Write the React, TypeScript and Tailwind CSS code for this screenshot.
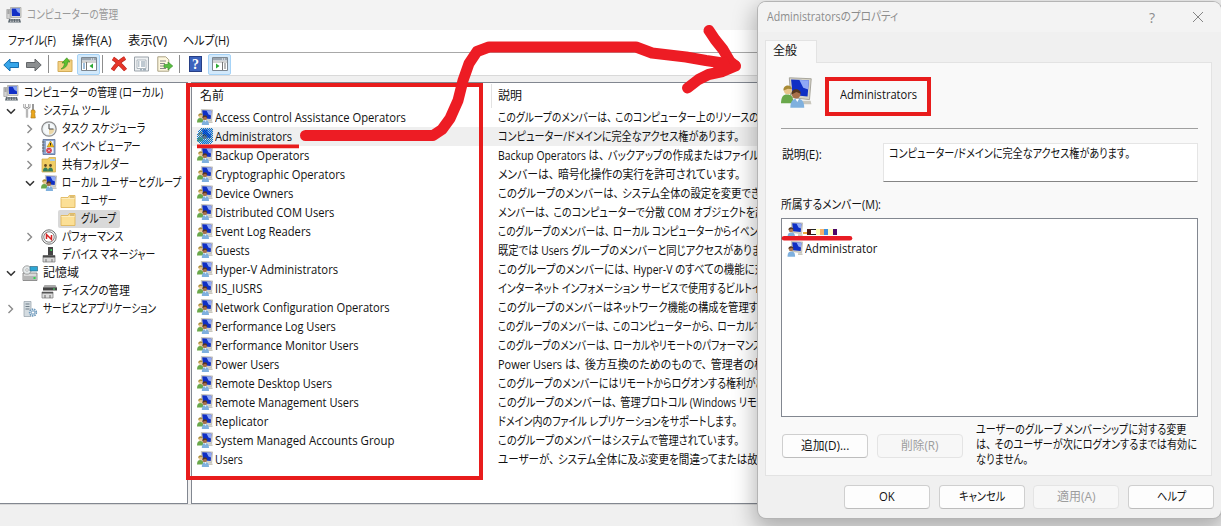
import React, { useLayoutEffect, useRef, useState } from 'react';

interface TextProps {
  children: string;
  w: number;
  className?: string;
}

/**
 * UiText
 * Single line of UI text, condensed or stretched to the given width.
 * The comma keeps some room after it, the other kana are set tight.
 */
const UiText: React.FC<TextProps> = ({ children, w, className = '' }) => {
  const ref = useRef<HTMLSpanElement>(null);
  const [scale, setScale] = useState(1);

  useLayoutEffect(() => {
    if (ref.current) setScale(w / ref.current.offsetWidth);
  }, [children, w]);

  return (
    <span className={`block shrink-0 leading-[18px] ${className}`} style={{ width: w }}>
      <span
        ref={ref}
        className="inline-block origin-left whitespace-pre"
        style={{ transform: `scaleX(${scale})` }}
      >
        {children.split(/(、)/).map((part, i) =>
          part === '、' ? <span key={i} className="pr-1">{part}</span> : part
        )}
      </span>
    </span>
  );
};

type IconName =
  | 'computer' | 'tools' | 'clock' | 'event' | 'shared' | 'group' | 'folder' | 'perf'
  | 'device' | 'storage' | 'disk' | 'services' | 'user' | 'groupSelected';

const Screen = () => (
  <>
    <path d="M4.300.4 15.600.9 14.700 11.700 5 10.500Z" fill="#d6d3c6" stroke="#a5a39a" strokeWidth=".5" />
    <path d="M5.200 1.300 14.400 1.700 13.700 10 6 9.300Z" fill="#0f2fc4" />
    <path d="M9.500 1.500 14.400 1.700 14 6.500 11.500 5.500Z" fill="#8fa8f6" />
    <path d="M11 12.200h4.300l.4 1.800H11z" fill="#c9c7bd" />
  </>
);

const People = () => (
  <>
    <path d="M0 13.600c.1-3.400 1-4.600 3.200-4.600s3.200 1.200 3.200 4.600z" fill="#6aa84b" />
    <circle cx="3.500" cy="6.900" r="2" fill="#e8c58c" />
    <path d="M1.300 7C.9 3.600 5.700 3.600 5.700 6.300L3.600 6z" fill="#a88a35" />
    <path d="M4.800 15.900c.1-3.600 1.200-4.700 3.600-4.700s3.500 1.100 3.600 4.700z" fill="#7fb0de" />
    <circle cx="7.800" cy="8.900" r="2.200" fill="#a8704b" />
    <path d="M5.400 9C5 5.500 10.300 5.500 10.200 8.700L8 7.800z" fill="#54361f" />
    <path d="m7.500 11.300.9 1.600.9-1.600" fill="#fff" />
  </>
);

const Icon: React.FC<{ name: IconName; size?: number }> = ({ name, size = 16 }) => (
  <svg width={size} height={size} viewBox="0 0 16 16" className="block shrink-0">
    {name === 'computer' && (
      <>
        <path d="M4.500.5h10.500v10H5z" fill="#d8d8d4" stroke="#a0a09c" strokeWidth=".7" />
        <path d="M5.600 1.500H14v7.500H6z" fill="#1230c6" />
        <path d="M9.500 1.500H14v5l-2.500-1.500z" fill="#86a3f4" />
        <path d="M.8 2.500h3.400v9H.8z" fill="#d3d3d3" stroke="#909090" strokeWidth=".6" />
        <path d="M1.500 4h2M1.500 6h2" stroke="#777" />
        <path d="M3 12h11l1 3.500H2z" fill="#5d6870" />
        <path d="M4 13h9M4 14.500h9" stroke="#d5d5d5" strokeDasharray="1.500 1" strokeWidth=".7" />
      </>
    )}
    {name === 'tools' && (
      <>
        <path d="M2.500 1v3.200L5 5.800l2.300-1.600V1M5 6v8.500" fill="none" stroke="#888" strokeWidth="2.2" />
        <path d="M2.500 1v3.200L5 5.800l2.300-1.600V1M5 6v8.500" fill="none" stroke="#e8e8e8" strokeWidth="1" />
        <path d="M11 1v6" stroke="#777" strokeWidth="1.5" />
        <path d="M9.500 7h3l.8 2-.6 1.500.6 4.500H8.900l.6-4.500L9 9z" fill="#e9a61c" stroke="#a87412" strokeWidth=".6" />
      </>
    )}
    {name === 'clock' && (
      <>
        <circle cx="8" cy="8" r="7.200" fill="#e6ecef" stroke="#8c8c8c" strokeWidth="1.200" />
        <circle cx="8" cy="8" r="5.500" fill="#f6f9fa" />
        <path d="M8 8h5.500A5.500 5.500 0 0 1 8 13.500z" fill="#ecd8a8" />
        <path d="M8 3v5h4.500" fill="none" stroke="#444" />
      </>
    )}
    {name === 'event' && (
      <>
        <path d="M2 .5h12v15H2z" fill="#8ea7cf" stroke="#5b6d95" strokeWidth=".8" />
        <path d="M5 2h7.500v12H5z" fill="#edf2fa" />
        <path d="M1 3h2.500M1 6h2.500M1 9h2.500M1 12h2.500" stroke="#666" />
        <path d="m9.500 2 3.500 6H6z" fill="#f5bd17" stroke="#9b740d" strokeWidth=".5" />
        <path d="M9.500 4v2.500" stroke="#222" />
        <circle cx="8" cy="11.500" r="2.800" fill="#d4374a" />
        <path d="m7 10.500 2 2m0-2-2 2" stroke="#fff" strokeWidth=".8" />
      </>
    )}
    {name === 'shared' && (
      <>
        <path d="M1 2h6l1-1.500h6.500V15H1z" fill="#f0cd62" stroke="#c9a548" strokeWidth=".7" />
        <path d="M9 2h5v2H9z" fill="#a7cce8" />
        <circle cx="4.500" cy="8.500" r="1.400" fill="#624821" />
        <circle cx="9.500" cy="8.500" r="1.400" fill="#624821" />
        <path d="M2 14.500c0-3 1-4 2.500-4s2.500 1 2.500 4zM7 14.500c0-3 1-4 2.500-4s2.500 1 2.500 4z" fill="#347e5d" />
      </>
    )}
    {(name === 'group' || name === 'groupSelected') && (
      <>
        <Screen />
        <People />
      </>
    )}
    {name === 'groupSelected' && (
      <>
        <defs>
          <pattern id="dither" width="2" height="2" patternUnits="userSpaceOnUse">
            <path d="M0 0h1v1H0zM1 1h1v1H1z" fill="#0878d4" />
          </pattern>
        </defs>
        <path d="M4 0h12v12l-1 4H4l-4-2v-5l1-5z" fill="url(#dither)" shapeRendering="crispEdges" />
      </>
    )}
    {name === 'user' && (
      <>
        <Screen />
        <path d="M.5 15.800c.1-4 1.200-5.200 3.800-5.200s3.700 1.200 3.800 5.200z" fill="#7fb0de" />
        <circle cx="4" cy="8" r="2.300" fill="#b07850" />
        <path d="M1.500 8C1.100 4.400 6.600 4.400 6.500 7.800L4.200 6.800z" fill="#54361f" />
      </>
    )}
    {name === 'folder' && (
      <>
        <path d="M1 4.500h7L9.300 2.500H15v12H1z" fill="#fbdf95" stroke="#e0b75c" strokeWidth=".9" />
        <path d="M10 4h4" stroke="#b99a58" />
        <path d="M1.500 5.500h13" stroke="#fdecbd" />
      </>
    )}
    {name === 'perf' && (
      <>
        <circle cx="8" cy="8" r="7.200" fill="#eee" stroke="#777" />
        <circle cx="8" cy="8" r="5.200" fill="#fff" stroke="#666" strokeWidth=".8" />
        <path d="M5.500 10V5.500l5 5V6" fill="none" stroke="#d52323" strokeWidth="1.500" />
      </>
    )}
    {name === 'device' && (
      <>
        <path d="M7 0h5v10H7z" fill="#444" />
        <path d="M9.500 2h1.500v2H9.500z" fill="#45d45f" />
        <path d="M2 8.500h12v6.500H2z" fill="#d8d8d8" stroke="#777" strokeWidth=".7" />
        <path d="M2 8.500h12v2H2z" fill="#484848" />
        <path d="M5 12v3M11 12v3" stroke="#777" />
      </>
    )}
    {name === 'storage' && (
      <>
        <path d="M1 8h14v7.500H1z" fill="#dadada" stroke="#777" strokeWidth=".8" />
        <path d="M1 11h14v4H1z" fill="#b5b5b5" />
        <circle cx="5" cy="5" r="4.200" fill="#e4e9ea" stroke="#909090" strokeWidth=".8" />
        <circle cx="5" cy="5" r="1.300" fill="#fff" stroke="#888" strokeWidth=".5" />
        <path d="M8 1.500h7.500V6H8z" fill="#2ca6d4" stroke="#376a83" strokeWidth=".7" />
        <path d="M11.500 12h2v2h-2z" fill="#35d54e" />
      </>
    )}
    {name === 'disk' && (
      <>
        <path d="M3.500 2h11l1.500 3H2z" fill="#a9a9a9" />
        <path d="M2 4.500h14v3H2z" fill="#444" />
        <path d="M12 5.500h2v1h-2z" fill="#4bdc69" />
        <path d="M1 9h11v6H1z" fill="#ddd" stroke="#777" strokeWidth=".7" />
        <path d="M1 9h11v1.500H1z" fill="#555" />
        <path d="M4 12v3M9 12v3" stroke="#666" />
      </>
    )}
    {name === 'services' && (
      <>
        <path d="M2 .5h7v15H2z" fill="#d4dce1" stroke="#929ea6" strokeWidth=".7" />
        <path d="M3.500 3h4M3.500 5.500h4M3.500 8h4" stroke="#6f7d87" />
        <circle cx="11" cy="11.500" r="3.300" fill="#edf4fa" stroke="#6f9abc" strokeWidth="1.700" strokeDasharray="1.500 .8" />
        <circle cx="11" cy="11.500" r="1.700" fill="#fff" stroke="#6f9abc" />
      </>
    )}
  </svg>
);

interface TreeItem {
  label: string;
  w: number;
  level: number;
  icon: IconName;
  state?: 'open' | 'closed';
  selected?: boolean;
}

const tree: TreeItem[] = [
  { label: 'コンピューターの管理 (ローカル)', w: 139, level: 0, icon: 'computer' },
  { label: 'システム ツール', w: 67, level: 1, icon: 'tools', state: 'open' },
  { label: 'タスク スケジューラ', w: 83, level: 2, icon: 'clock', state: 'closed' },
  { label: 'イベント ビューアー', w: 79, level: 2, icon: 'event', state: 'closed' },
  { label: '共有フォルダー', w: 67, level: 2, icon: 'shared', state: 'closed' },
  { label: 'ローカル ユーザーとグループ', w: 119, level: 2, icon: 'group', state: 'open' },
  { label: 'ユーザー', w: 36, level: 3, icon: 'folder' },
  { label: 'グループ', w: 35, level: 3, icon: 'folder', selected: true },
  { label: 'パフォーマンス', w: 61, level: 2, icon: 'perf', state: 'closed' },
  { label: 'デバイス マネージャー', w: 93, level: 2, icon: 'device' },
  { label: '記憶域', w: 36, level: 1, icon: 'storage', state: 'open' },
  { label: 'ディスクの管理', w: 68, level: 2, icon: 'disk' },
  { label: 'サービスとアプリケーション', w: 113, level: 1, icon: 'services', state: 'closed' },
];

const indents = ['pl-[3px]', 'pl-[5px]', 'pl-[24px]', 'pl-[43px]'];

const TreeRow: React.FC<{ item: TreeItem }> = ({ item }) => (
  <div className={`flex h-[18px] items-center ${indents[item.level]}`}>
    {item.level > 0 && (
      <svg width="17" height="12" viewBox="0 0 17 12" className="shrink-0" fill="none">
        {item.state === 'open' && <path d="m2 4.200 4 4 4-4" stroke="#333" strokeWidth="1.6" />}
        {item.state === 'closed' && <path d="m3.500 2 4 4-4 4" stroke="#8a8a8a" strokeWidth="1.4" />}
      </svg>
    )}
    <div
      className={
        item.selected
          ? '-ml-0.5 flex h-[18px] items-center gap-[5px] rounded-xs bg-[#d9d9d9] pr-1 pl-0.5'
          : 'flex h-[18px] items-center gap-[5px]'
      }
    >
      <Icon name={item.icon} />
      <UiText w={item.w}>{item.label}</UiText>
    </div>
  </div>
);

interface Group {
  name: string;
  nameW: number;
  desc: string;
  descW: number;
}

const groups: Group[] = [
  { name: 'Access Control Assistance Operators', nameW: 191, desc: 'このグループのメンバーは、このコンピューター上のリソースの説', descW: 270 },
  { name: 'Administrators', nameW: 77, desc: 'コンピューター/ドメインに完全なアクセス権があります。', descW: 241 },
  { name: 'Backup Operators', nameW: 94, desc: 'Backup Operators は、バックアップの作成またはファイル', descW: 261 },
  { name: 'Cryptographic Operators', nameW: 130, desc: 'メンバーは、暗号化操作の実行を許可されています。', descW: 242 },
  { name: 'Device Owners', nameW: 78, desc: 'このグループのメンバーは、システム全体の設定を変更でき', descW: 262 },
  { name: 'Distributed COM Users', nameW: 119, desc: 'メンバーは、このコンピューターで分散 COM オブジェクトを起', descW: 267 },
  { name: 'Event Log Readers', nameW: 96, desc: 'このグループのメンバーは、ローカル コンピューターからイベン', descW: 260 },
  { name: 'Guests', nameW: 35, desc: '既定では Users グループのメンバーと同じアクセスがありま', descW: 263 },
  { name: 'Hyper-V Administrators', nameW: 123, desc: 'このグループのメンバーには、Hyper-V のすべての機能に対', descW: 267 },
  { name: 'IIS_IUSRS', nameW: 47, desc: 'インターネット インフォメーション サービスで使用するビルトイ', descW: 263 },
  { name: 'Network Configuration Operators', nameW: 175, desc: 'このグループのメンバーはネットワーク機能の構成を管理す', descW: 260 },
  { name: 'Performance Log Users', nameW: 121, desc: 'このグループのメンバーは、このコンピューターから、ローカルで', descW: 265 },
  { name: 'Performance Monitor Users', nameW: 144, desc: 'このグループのメンバーは、ローカルやリモートのパフォーマンス', descW: 264 },
  { name: 'Power Users', nameW: 64, desc: 'Power Users は、後方互換のためのもので、管理者の権', descW: 267 },
  { name: 'Remote Desktop Users', nameW: 117, desc: 'このグループのメンバーにはリモートからログオンする権利があ', descW: 267 },
  { name: 'Remote Management Users', nameW: 144, desc: 'このグループのメンバーは、管理プロトコル (Windows リモ', descW: 259 },
  { name: 'Replicator', nameW: 53, desc: 'ドメイン内のファイル レプリケーションをサポートします。', descW: 239 },
  { name: 'System Managed Accounts Group', nameW: 179, desc: 'このグループのメンバーはシステムで管理されています。', descW: 241 },
  { name: 'Users', nameW: 28, desc: 'ユーザーが、システム全体に及ぶ変更を間違ってまたは故', descW: 260 },
];

const Separator = () => <div className="h-[18px] w-px shrink-0 bg-[#8d8d8d]" />;

const PaneIcon: React.FC<{ flip?: boolean }> = ({ flip }) => (
  <svg width="16" height="16" viewBox="0 0 16 16">
    <path d="M.5 1.500h15v13H.5z" fill="#fff" stroke="#7d8790" />
    <path d="M1 2h14v2.500H1z" fill="#9aa5b0" />
    <path d="M10 3h1M12 3h1" stroke="#fff" />
    <path d="M1 6h14" stroke="#a6a6a6" />
    {flip ? (
      <>
        <path d="M10.500 6v8" stroke="#777" />
        <path d="M12 8h2M12 10h2M12 12h2" stroke="#777" />
        <path d="M4 7.500v5L7.500 10z" fill="#2daa35" />
      </>
    ) : (
      <>
        <path d="M5.500 6v8" stroke="#777" />
        <path d="M2 8h2M2 10h2M2 12h2" stroke="#3f7fba" />
        <path d="M12 7.500v5L8.500 10z" fill="#2daa35" />
      </>
    )}
  </svg>
);

const Toolbar = () => (
  <div className="flex h-[23px] items-center border-b border-[#d9d9d9] bg-white pl-[3px]">
    <svg width="39" height="16" viewBox="0 0 39 16" className="relative top-px">
      <path d="M.8 8 7 2v3.500h8.500v5H7V14z" fill="#37a5e9" stroke="#176eae" />
      <path d="M38.200 8 32 2v3.500h-8.500v5H32V14z" fill="#8c8f91" stroke="#636669" />
    </svg>
    <div className="ml-1.5"><Separator /></div>
    <svg width="16" height="16" viewBox="0 0 16 16" className="relative top-px ml-2">
      <path d="M1 4.500h6L8.300 3H15v11.500H1z" fill="#f4d182" stroke="#d3ac58" />
      <path d="M4 12c2.500-1.500 3.500-4 3.500-6H5L9.800.8 13 5h-2.400c0 4-2.600 6.500-6.600 7z" fill="#5fc02f" stroke="#398a24" strokeWidth=".6" />
    </svg>
    <div className="ml-1 flex h-[21px] w-[23px] items-center justify-center rounded-xs border border-[#a6d3f7] bg-[#d2e9fb]">
      <PaneIcon />
    </div>
    <div className="ml-0.5"><Separator /></div>
    <svg width="18" height="16" viewBox="0 0 18 16" className="ml-[7px]">
      <path d="M3 2.500C7 5 11 9 15.500 14M15 2C10 5 6 9 2.500 14" fill="none" stroke="#b3241c" strokeWidth="4" />
      <path d="M3 2.500C7 5 11 9 15.500 14M15 2C10 5 6 9 2.500 14" fill="none" stroke="#e63629" strokeWidth="3" />
    </svg>
    <svg width="16" height="16" viewBox="0 0 16 16" className="ml-1.5">
      <path d="M.5 1h14v14H.5z" fill="#eef1f3" stroke="#9ba3aa" />
      <path d="M3 4h9v8.500H3z" fill="#fff" stroke="#9ca7ae" strokeWidth=".8" />
      <path d="M4 6h1.500M4 8h1.500M4 10h1.500M7 6h4M7 8h4M7 10h4M6 13.800h2M9 13.800h3" stroke="#7f93a3" />
    </svg>
    <svg width="16" height="16" viewBox="0 0 16 16" className="ml-[7px]">
      <path d="M.8.8h8l3 3v11.400h-11z" fill="#fdf7dd" stroke="#aba285" />
      <path d="M3 5h6M3 7.500h5M3 10h4M3 12.500h6" stroke="#8a8a8a" />
      <path d="M7 8.500h4V6l4.800 4-4.800 4v-2.500H7z" fill="#59be41" stroke="#348c25" strokeWidth=".6" />
    </svg>
    <div className="ml-1.5"><Separator /></div>
    <div className="ml-[9px] flex h-4 w-[13px] items-center justify-center border border-[#273f85] bg-[#3c63bd] font-['Liberation_Serif',serif] text-[14px] font-bold text-white">
      ?
    </div>
    <div className="ml-1.5 flex h-[21px] w-[23px] items-center justify-center rounded-xs border border-[#a6d3f7] bg-[#d2e9fb]">
      <PaneIcon flip />
    </div>
  </div>
);

interface ButtonProps {
  label: string;
  w: number;
  disabled?: boolean;
}

const DialogButton: React.FC<ButtonProps> = ({ label, w, disabled = false }) => (
  <button
    disabled={disabled}
    className="flex h-6 w-[86px] items-center justify-center rounded-sm border border-[#cfcfcf] border-b-[#bdbdbd] bg-[#fdfdfd] text-left disabled:border-[#e4e4e4] disabled:bg-[#f7f7f7] disabled:text-[#9d9d9d]"
  >
    <UiText w={w}>{label}</UiText>
  </button>
);

const PropertiesDialog = () => (
  <div className="absolute top-[2px] left-[758px] flex h-[516px] w-[463px] flex-col overflow-hidden rounded-lg bg-[#f0f0f0] shadow-[0_0_0_1px_#b4b4b4,0_8px_22px_4px_rgba(0,0,0,0.28)]">
    <div className="flex h-[30px] shrink-0 items-center bg-[#f3f3f3] pl-[9px] text-[#8c8c8c]">
      <UiText w={131}>Administratorsのプロパティ</UiText>
      <span className="ml-[251px] w-2 text-[14px]">?</span>
      <svg width="12" height="12" viewBox="0 0 12 12" className="ml-[35px]">
        <path d="m1 1 10 10M11 1 1 11" stroke="#858585" />
      </svg>
    </div>
    <div className="mt-2 ml-[7px] h-[23px] w-[52px] shrink-0 border border-b-0 border-[#e3e3e3] bg-[#f9f9f9] pt-px pl-[7px]">
      <UiText w={24}>全般</UiText>
    </div>
    <div className="-mt-px ml-[7px] flex h-[414px] w-[447px] shrink-0 flex-col border border-[#e3e3e3] bg-[#f9f9f9] pr-[13px] pl-[15px]">
      {/* hides the panel border below the active tab */}
      <div className="-mt-px -ml-[15px] h-px w-[50px] shrink-0 bg-[#f9f9f9]" />
      <div className="flex h-[66px] shrink-0 border-b border-[#a0a0a0]">
        <div className="mt-[14px]"><Icon name="group" size={31} /></div>
        <div className="mt-[14px] ml-[13px] flex h-[39px] w-[106px] items-center border-4 border-[#e81c1c] pb-[3px] pl-[11px]">
          <UiText w={77}>Administrators</UiText>
        </div>
      </div>
      <div className="mt-[14px] flex shrink-0">
        <UiText w={40} className="mt-[3px] ml-px">説明(E):</UiText>
        <div className="ml-[61px] h-[39px] w-[315px] border border-[#e5e5e5] border-b-[#858585] bg-white pt-px pl-[5px]">
          <UiText w={241}>コンピューター/ドメインに完全なアクセス権があります。</UiText>
        </div>
      </div>
      <UiText w={100} className="mt-[14px]">所属するメンバー(M):</UiText>
      <div className="mt-[4px] h-[199px] w-[417px] shrink-0 border border-[#828790] bg-white pt-[2px] pl-[5px]">
        <div className="flex h-[18px] items-center">
          <Icon name="user" />
          <svg width="36" height="6" viewBox="0 0 36 6" className="mt-[3px]">
            <path d="M0 3h5v2H0z" fill="#f0a63c" />
            <path d="M4 0h4v6H4z" fill="#4a1710" />
            <path d="M8 0h6v1H8zM8 5h6v1H8z" fill="#222" />
            <path d="M13 0h4v6h-4z" fill="#ffffb8" />
            <path d="M17 0h4v6h-4z" fill="#f6b26b" />
            <path d="M21 0h4v6h-4z" fill="#3d8fdf" />
            <path d="M25 0h5v6h-5z" fill="#fffec0" />
            <path d="M30 0h4v6h-4z" fill="#4b0868" />
          </svg>
        </div>
        <div className="flex h-[19px] items-center gap-0.5">
          <Icon name="user" />
          <UiText w={72}>Administrator</UiText>
        </div>
      </div>
      <div className="flex">
        <div className="mt-[17px] ml-px flex gap-[9px]">
          <DialogButton label="追加(D)..." w={48} />
          <DialogButton label="削除(R)" w={38} disabled />
        </div>
        <div className="mt-1 ml-[13px]">
          <UiText w={210} className="h-[15px]">ユーザーのグループ メンバーシップに対する変更</UiText>
          <UiText w={221} className="h-[15px]">は、そのユーザーが次にログオンするまでは有効に</UiText>
          <UiText w={52} className="h-[15px]">なりません。</UiText>
        </div>
      </div>
    </div>
    <div className="mt-[9px] flex gap-[8.7px] pl-[86px]">
      <DialogButton label="OK" w={16} />
      <DialogButton label="キャンセル" w={46} />
      <DialogButton label="適用(A)" w={39} disabled />
      <DialogButton label="ヘルプ" w={29} />
    </div>
  </div>
);

/** Hand-drawn red marks on top of both windows */
const Annotations = () => (
  <svg width="1221" height="526" viewBox="0 0 1221 526" className="pointer-events-none absolute top-0 left-0" fill="none">
    <path d="M188 85h293v393H188z" stroke="#e81c1c" strokeWidth="4" />
    <path d="M197 146.300h102" stroke="#e81c1c" strokeWidth="3.7" />
    <path d="M784 238.300h66" stroke="#e81c24" strokeWidth="4.5" strokeLinecap="round" />
    <g stroke="#ed1c24" strokeWidth="11" strokeLinecap="round" strokeLinejoin="round">
      <path d="M305.500 135.500H433l9-6 8-11 8-18 5-20 6-17 8-12 12-4.500H636l16 6 34 4 20 3.500 20 3 9 2" />
      <path d="m709 30.500 6 9 8 10 7 12 5.500 4.500-13 5.500-14 3-10 5-11 8.500" />
      <path d="m716 66 9-6 4 9z" fill="#ed1c24" strokeWidth="6" />
    </g>
  </svg>
);

export default function App() {
  return (
    <div className="relative flex h-[526px] w-[1221px] flex-col overflow-hidden bg-[#f0f0f0] font-['Open_Sans','Noto_Sans_CJK_JP',sans-serif] text-[12px] text-[#111] [font-feature-settings:'palt']">
      <div className="flex h-[30px] shrink-0 items-center gap-[5px] bg-[#f3f3f3] pl-1.5 text-[#999]">
        <Icon name="computer" />
        <UiText w={91}>コンピューターの管理</UiText>
      </div>
      <div className="flex h-[23px] shrink-0 items-center gap-4 border-b border-[#a8a8a8] bg-white pl-2">
        <UiText w={48}>ファイル(F)</UiText>
        <UiText w={40}>操作(A)</UiText>
        <UiText w={39}>表示(V)</UiText>
        <UiText w={46}>ヘルプ(H)</UiText>
      </div>
      <Toolbar />
      <div className="mt-[6px] flex h-[422px] shrink-0">
        <div className="w-[188px] shrink-0 border-y border-r border-[#828790] bg-white pt-px">
          {tree.map((item) => (
            <TreeRow key={item.label} item={item} />
          ))}
        </div>
        <div className="ml-[3px] flex-1 overflow-hidden border-y border-l border-[#828790] bg-white">
          <div className="flex h-[25px] items-center pt-px pl-2">
            <UiText w={24}>名前</UiText>
            <div className="ml-[267px] h-6 w-px bg-[#e2e2e2]" />
            <UiText w={24} className="ml-[6px]">説明</UiText>
          </div>
          {groups.map((g, i) => (
            <div
              key={g.name}
              className={`flex h-[19px] items-center pl-[5px] ${i === 1 ? 'bg-[#efefef]' : ''}`}
            >
              <div className="pb-0.5">
                <Icon name={i === 1 ? 'groupSelected' : 'group'} />
              </div>
              <div className="ml-0.5 w-[283px] shrink-0">
                <UiText w={g.nameW}>{g.name}</UiText>
              </div>
              <UiText w={g.descW}>{g.desc}</UiText>
            </div>
          ))}
        </div>
      </div>
      <div className="h-px bg-[#d8d8d8]" />
      <PropertiesDialog />
      <Annotations />
    </div>
  );
}
